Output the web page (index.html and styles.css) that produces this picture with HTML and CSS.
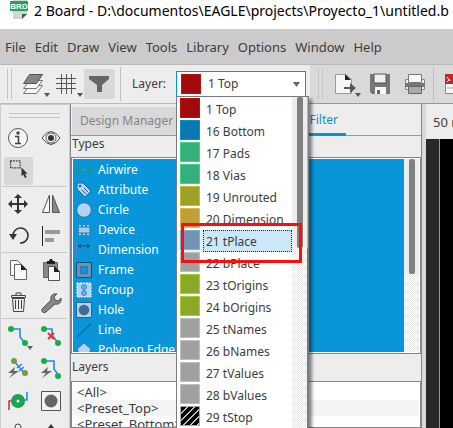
FILE: index.html
```html
<!DOCTYPE html>
<html lang="en">
<head>
<meta charset="utf-8">
<title>2 Board</title>
<link rel="stylesheet" href="styles.css">
</head>
<body>
<header class="titlebar">
  <svg class="app-icon" width="20" height="24" viewBox="0 0 20 24"><path d="M3 0h14v18l-5 5H3z" fill="#d4d6d6"/><path d="M12 23v-5h5z" fill="#555"/><rect x="0" y="5" width="18" height="10" rx="1" fill="#23a452"/><text x="9" y="13" class="app-icon-text">BRD</text></svg>
  <h1 class="title">2 Board - D:\documentos\EAGLE\projects\Proyecto_1\untitled.b</h1>
</header>
<nav class="menubar">
  <button>File</button><button>Edit</button><button>Draw</button><button>View</button><button>Tools</button><button>Library</button><button>Options</button><button>Window</button><button>Help</button>
</nav>
<div class="toolbar">
  <div class="tools-left">
    <span class="grip"></span>
    <button class="tool" aria-label="Layer settings"><svg width="32" height="30" viewBox="0 0 32 30"><g fill="#f7f7f7" stroke="#777"><path d="M3.500 24.500l6-8h13l-6 8z"/><path d="M3.500 19.500l6-8h13l-6 8z"/></g><path d="M3.500 14.500l6-9h13l-6 9z" fill="#858585" stroke="#555"/><path d="M24 24h6l-3 4z" fill="#555"/></svg></button>
    <button class="tool" aria-label="Grid"><svg width="32" height="30" viewBox="0 0 32 30"><path d="M9.500 5v20M14.500 5v20M19.500 5v20M4 9.500h20M4 14.500h20M4 19.500h20" fill="none" stroke="#555"/><path d="M25 24h6l-3 4z" fill="#555"/></svg></button>
    <button class="tool pressed" aria-label="Filter"><svg width="31" height="30" viewBox="0 0 31 30"><path d="M5 7h20v3l-7 6v7h-5v-7l-8-6z" fill="#666"/></svg></button>
    <span class="divider"></span>
    <label class="layer-label" for="layer">Layer:</label>
    <div class="combo">
      <select id="layer"><option>1 Top</option></select>
      <span class="swatch combo-swatch c-top"></span>
      <svg class="combo-arrow" width="7" height="6" viewBox="0 0 7 6"><path d="M0 0h7l-3.500 5z" fill="#666"/></svg>
      <div class="popup">
        <ul class="options" role="listbox" aria-label="Layer">
          <li role="option"><span class="swatch c-top"></span><span class="name">1 Top</span></li>
          <li role="option"><span class="swatch c-bottom"></span><span class="name">16 Bottom</span></li>
          <li role="option"><span class="swatch c-pads"></span><span class="name">17 Pads</span></li>
          <li role="option"><span class="swatch c-pads"></span><span class="name">18 Vias</span></li>
          <li role="option"><span class="swatch c-unrouted"></span><span class="name">19 Unrouted</span></li>
          <li role="option"><span class="swatch c-dimension"></span><span class="name">20 Dimension</span></li>
          <li role="option" aria-selected="true" class="selected"><span class="swatch c-place"></span><span class="name">21 tPlace</span></li>
          <li role="option"><span class="swatch c-gray"></span><span class="name">22 bPlace</span></li>
          <li role="option"><span class="swatch c-origins"></span><span class="name">23 tOrigins</span></li>
          <li role="option"><span class="swatch c-origins"></span><span class="name">24 bOrigins</span></li>
          <li role="option"><span class="swatch c-gray"></span><span class="name">25 tNames</span></li>
          <li role="option"><span class="swatch c-gray"></span><span class="name">26 bNames</span></li>
          <li role="option"><span class="swatch c-gray"></span><span class="name">27 tValues</span></li>
          <li role="option"><span class="swatch c-gray"></span><span class="name">28 bValues</span></li>
          <li role="option"><span class="swatch c-stop"></span><span class="name">29 tStop</span></li>
        </ul>
        <div class="scroll popup-scroll"><span class="thumb"></span></div>
        <span class="highlight"></span>
      </div>
    </div>
  </div>
  <div class="tools-right">
    <span class="grip"></span>
    <button class="tool" aria-label="Export"><svg width="32" height="30" viewBox="0 0 32 30"><path d="M4.500 5.500h10l6 5v14h-16z" fill="#f6f6f6" stroke="#999"/><path d="M14 5l6 6h-6z" fill="#222"/><path d="M13 18h6v-4l6 5-6 5v-4h-6z" fill="#555"/><path d="M24 24h6l-3 4z" fill="#555"/></svg></button>
    <button class="tool save" aria-label="Save"><svg width="32" height="30" viewBox="0 0 32 30"><path d="M5 5h20v20H7l-2-2z" fill="#777"/><path d="M9 5h12v9H9z" fill="#eee" stroke="#555"/><path d="M10 18h11v7H10z" fill="#f8f8f8"/><path d="M12 21h3v4h-3z" fill="#666"/></svg></button>
    <button class="tool print" aria-label="Print"><svg width="32" height="30" viewBox="0 0 32 30"><path d="M4.500 10.500h19v10h-19z" fill="#f0f0f0" stroke="#888"/><path d="M7.500 5.500h13v8h-13z" fill="#f8f8f8" stroke="#777"/><path d="M4 14h20v4H4z" fill="#777"/><path d="M7.500 17.500h13v7h-13z" fill="#aaa" stroke="#666"/></svg></button>
    <span class="divider"></span>
    <button class="tool cam" aria-label="CAM processor"><svg width="24" height="30" viewBox="0 0 24 30"><path d="M.5 5.500h18v19H.5z" fill="#f6f6f6" stroke="#888"/><path d="M0 5h19v10H0z" fill="#c8242c"/><path d="M2 8l3 4m-3 1 3-3" stroke="#fff" fill="none"/><path d="M2 19h8" stroke="#aaa"/></svg></button>
  </div>
</div>
<main class="workspace">
  <aside class="palette">
    <div class="hgrip"></div>
    <div class="group">
      <button aria-label="Info"><svg viewBox="0 0 32 32"><circle cx="16" cy="16" r="9.500" fill="#f5f5f5" stroke="#555"/><circle cx="16" cy="11" r="1.700" fill="#444"/><path d="M13 14.500h3.500v7M13 21.500h6" fill="none" stroke="#444" stroke-width="1.600"/></svg></button>
      <button aria-label="Show"><svg viewBox="0 0 32 32"><path d="M7 16Q16 3 25 16Q16 29 7 16z" fill="#f8f8f8" stroke="#444"/><circle cx="16" cy="16" r="5" fill="none" stroke="#555"/><circle cx="16" cy="16" r="3" fill="#333"/></svg></button>
      <button class="pressed" aria-label="Group select"><svg viewBox="0 0 32 32"><path d="M7.500 4.500h11v8h-11z" fill="none" stroke="#444" stroke-width="1.400" stroke-dasharray="2 1"/><path d="M20 12v10l2-2 2 4 2-1-2-4h3z" fill="#333"/></svg></button>
    </div>
    <div class="group">
      <button aria-label="Move"><svg viewBox="0 0 32 32"><path d="M16 7l4 4h-3v5h5v-3l4 4-4 4v-3h-5v5h3l-4 4-4-4h3v-5h-5v3l-4-4 4-4v3h5v-5h-3z" fill="#333"/></svg></button>
      <button aria-label="Mirror"><svg viewBox="0 0 32 32"><path d="M14.500 8v17.500h-7z" fill="#f8f8f8" stroke="#555"/><path d="M17.500 8v17.500h7z" fill="#888" stroke="#555"/></svg></button>
      <button aria-label="Rotate"><svg viewBox="0 0 32 32"><path d="M11 17a7.500 7.500 0 1 1 7 7" fill="none" stroke="#333" stroke-width="1.600"/><path d="M7 15h8l-4 6z" fill="#333"/></svg></button>
      <button aria-label="Align"><svg viewBox="0 0 32 32"><path d="M7.500 7v20" stroke="#222"/><path d="M10 11h15v4H10zM10 19h9v4h-9z" fill="#999"/></svg></button>
    </div>
    <div class="group">
      <button aria-label="Copy"><svg viewBox="0 0 32 32"><g fill="#f8f8f8" stroke="#666"><path d="M8.500 7.500h7l4 4v11h-11z"/><path d="M12.500 11.500h7l5 5v10h-12z"/></g><path d="M19 11l6 6h-6z" fill="#222"/></svg></button>
      <button aria-label="Paste"><svg viewBox="0 0 32 32"><path d="M8.500 9.500h14v15h-14z" fill="#888" stroke="#666"/><path d="M12 8h2l1-2h2l1 2h2v3h-8z" fill="#222"/><path d="M13.500 13.500h6l5 5v9h-11z" fill="#f8f8f8" stroke="#555"/><path d="M19 13l6 6h-6z" fill="#222"/></svg></button>
      <button aria-label="Delete"><svg viewBox="0 0 32 32"><path d="M10.500 13.500h12l-1 13h-10z" fill="#eee" stroke="#444"/><path d="M9.500 10.500h14v2h-14zM14 10V8h5v2" fill="#eee" stroke="#444"/><path d="M13.500 15v9M16.500 15v9M19.500 15v9" stroke="#444"/></svg></button>
      <button aria-label="Change"><svg viewBox="0 0 32 32"><path d="M7 24l9-9c-1-4 2-7 6-6l-3 3 1 3 3 1 3-3c1 4-2 7-6 6l-9 8c-3 2-5-1-4-3z" fill="#888" stroke="#555"/></svg></button>
    </div>
    <div class="group">
      <button aria-label="Route"><svg viewBox="0 0 32 32"><path d="M9 10h9v8l5 6" fill="none" stroke="#168eea" stroke-width="1.600"/><circle cx="9" cy="10" r="3" fill="#19ad49"/><circle cx="23" cy="24" r="3" fill="#19ad49"/><path d="M25 27h6l-3 4z" fill="#666"/></svg></button>
      <button aria-label="Ripup"><svg viewBox="0 0 32 32"><path d="M9 10h8v6l6 8" fill="none" stroke="#168eea" stroke-width="1.600"/><circle cx="9" cy="10" r="3" fill="#19ad49"/><circle cx="23" cy="24" r="3" fill="#19ad49"/><path d="M13 14l6 6m0-6-6 6" stroke="#f22c30" stroke-width="2"/></svg></button>
      <button aria-label="Fanout"><svg viewBox="0 0 32 32"><path d="M12 10l11 13M15 17l5-4M17 20l5-4" fill="none" stroke="#168eea" stroke-width="1.500"/><circle cx="12" cy="10" r="3" fill="#6ea044"/><circle cx="23" cy="22" r="3" fill="#6ea044"/><path d="M13 16l-7 6h5l-4 5 10-7h-5z" fill="#666"/></svg></button>
      <button aria-label="Autoroute"><svg viewBox="0 0 32 32"><path d="M9 10h10v8l5 7" fill="none" stroke="#168eea" stroke-width="1.600"/><circle cx="9" cy="10" r="3" fill="#19ad49"/><circle cx="23" cy="25" r="3" fill="#19ad49"/><path d="M13 16l-7 6h5l-4 5 10-7h-5z" fill="#666"/></svg></button>
      <button aria-label="Via"><svg viewBox="0 0 32 32"><path d="M7 27v-9h6" fill="none" stroke="#c53b43" stroke-width="1.600"/><path d="M20 17h5V9" fill="none" stroke="#168eea" stroke-width="1.600"/><circle cx="16" cy="18" r="7" fill="#19a552"/><circle cx="16" cy="18" r="1.500" fill="#fff"/></svg></button>
      <button aria-label="Hole"><svg viewBox="0 0 32 32"><path d="M6.500 8.500h19v19h-19z" fill="#f5f5f5" stroke="#555"/><circle cx="16" cy="18" r="6.500" fill="#666"/></svg></button>
      <button aria-label="Polygon"><svg viewBox="0 0 32 32"><circle cx="16" cy="12" r="3" fill="none" stroke="#444"/></svg></button>
      <button aria-label="Text"><svg viewBox="0 0 32 32"><path d="M16 9l6 8H10z" fill="#333"/></svg></button>
    </div>
  </aside>
  <section class="dock">
    <div class="tabs"><button class="tab">Design Manager</button><button class="tab active">Filter</button></div>
    <h2 class="head types-head">Types</h2>
    <div class="list types">
      <ul class="type-rows">
        <li><svg viewBox="0 0 16 16"><path d="M2 8h12" stroke="#789"/><circle cx="2.500" cy="8" r="2.500" fill="#169a78"/><circle cx="13.500" cy="8" r="2.500" fill="#169a78"/></svg>Airwire</li>
        <li><svg viewBox="0 0 16 16"><path d="M1 1h6l8 8-6 6-8-8z" fill="#b4d3ef" stroke="#28658f"/><circle cx="4" cy="4" r="1.300" fill="#28658f"/><path d="M6 8l4 4m-2-6 4 4" stroke="#28658f"/></svg>Attribute</li>
        <li><svg viewBox="0 0 16 16"><circle cx="8" cy="8" r="7.300" fill="#b4d3ef" stroke="#32709e"/></svg>Circle</li>
        <li><svg viewBox="0 0 16 16"><path d="M4 3v10M8 3v10M12 3v10" stroke="#b4d3ef" stroke-width="2"/><path d="M2 5h12v6H2V9l1-1-1-1z" fill="#a9cbe9" stroke="#39759e"/></svg>Device</li>
        <li><svg viewBox="0 0 16 16"><path d="M.5 0v16M15.500 0v16" stroke="#4b87b0"/><path d="M3 4h10M5 2L2 4l3 2m6-4 3 2-3 2" fill="none" stroke="#174d73"/></svg>Dimension</li>
        <li><svg viewBox="0 0 16 16"><path d="M2 2h12v12H2z" fill="none" stroke="#6893b8" stroke-width="4"/><path d="M.5.5h15v15H.5z" fill="none" stroke="#174d73"/><path d="M4.500 4.500h7v7h-7z" fill="none" stroke="#3975a0"/></svg>Frame</li>
        <li><svg viewBox="0 0 16 16"><path d="M1 1h14v14H1z" fill="#b4d3ef" stroke="#eaf6ff" stroke-dasharray="2 1"/><circle cx="8" cy="5" r="2.500" fill="#62afe2" stroke="#3b91cb"/><circle cx="8" cy="11" r="2.500" fill="#62afe2" stroke="#3b91cb"/></svg>Group</li>
        <li><svg viewBox="0 0 16 16"><path d="M.5.5h15v15H.5z" fill="#b4d3ef" stroke="#286793"/><circle cx="8" cy="8" r="5.300" fill="#426b91"/></svg>Hole</li>
        <li><svg viewBox="0 0 16 16"><path d="M1 15L15 2" stroke="#174d73"/></svg>Line</li>
        <li><svg viewBox="0 0 16 16"><path d="M8 1l7 6-3 8H4L1 7z" fill="#b4d3ef" stroke="#32709e"/></svg>Polygon Edge</li>
      </ul>
      <div class="scroll types-scroll"><span class="thumb"></span></div>
    </div>
    <h2 class="head layers-head">Layers</h2>
    <ul class="list presets"><li>&lt;All&gt;</li><li>&lt;Preset_Top&gt;</li><li>&lt;Preset_Bottom&gt;</li></ul>
  </section>
  <section class="board">
    <div class="coords">50 mil (0.0 1.9)</div>
    <div class="canvas"><span class="ruler"></span></div>
  </section>
</main>
</body>
</html>
```
FILE: styles.css
```css
* { box-sizing: border-box; }
body {
  margin: 0;
  height: 100vh;
  display: flex;
  flex-direction: column;
  overflow: hidden;
  background: #ededed;
  color: #3c3c3c;
  font: 12px/20px "Noto Sans", "Open Sans", sans-serif;
}
button { border: 0; padding: 0; background: none; color: inherit; font: inherit; }
ul { list-style: none; margin: 0; padding: 0; }
svg { display: block; flex: none; }

.titlebar {
  flex: none;
  height: 29px;
  display: flex;
  padding-left: 10px;
  gap: 4px;
  overflow: hidden;
  background: #fff;
}
.app-icon { margin-top: -4px; }
.app-icon-text { fill: #fff; font: bold 8px "Liberation Sans", sans-serif; text-anchor: middle; }
.title { margin: 0; color: #000; font-size: 14px; line-height: 22px; font-weight: 400; white-space: pre; }

.menubar {
  flex: none;
  height: 36px;
  display: flex;
  align-items: center;
  gap: 9px;
  padding-left: 5px;
  background: #cbcbcb;
  border-bottom: 1px solid #b9b9b9;
  font-size: 13px;
}

.toolbar { flex: none; height: 39px; display: flex; }
.tools-left { flex: none; width: 310px; display: flex; align-items: center; padding-left: 7px; border-bottom: 1px solid #bbb; }
.tools-right { flex: 1; min-width: 0; overflow: hidden; display: flex; align-items: center; padding-left: 8px; background: #d9d9d9; border-bottom: 1px solid #999; }
.grip { flex: none; width: 5px; height: 30px; border: solid #c4c4c4; border-width: 0 1px; margin-right: 8px; }
.tool { flex: none; height: 30px; }
.pressed { background: #d8d8d8; border-radius: 2px; }
.divider { flex: none; width: 1px; height: 34px; background: #c0c0c0; }
.save { margin-left: 2px; }
.print { margin-left: 4px; }
.cam { margin-left: 11px; }
.tools-left .divider { margin-left: 5px; }
.layer-label { width: 44px; margin-left: 11px; }

.combo { position: relative; width: 130px; height: 26px; }
.combo select {
  appearance: none;
  width: 100%;
  height: 100%;
  padding: 0 0 0 31px;
  border: 1px solid #0893d8;
  border-radius: 0;
  background: #fff;
  color: inherit;
  font: inherit;
}
.combo-swatch { position: absolute; left: 5px; top: 3px; }
.combo-arrow { position: absolute; right: 6px; top: 11px; }
.swatch { flex: none; width: 20px; height: 20px; border: 1px solid; }
.c-top { background: #a00b0b; border-color: #c20e0e; }
.c-bottom { background: #0878b0; border-color: #0b90d2; }
.c-pads { background: #35b07a; border-color: #35d68f; }
.c-unrouted { background: #a0a028; border-color: #c0bf28; }
.c-dimension { background: #c0a035; border-color: #e0be3c; }
.c-place { background: #7394b5; border-color: #86abd2; }
.c-gray { background: #a0a0a0; border-color: #bcc2bb; }
.c-origins { background: #8ca828; border-color: #a8d02c; }
.c-stop { background: repeating-linear-gradient(135deg, #000 0 4px, #bbb 4px 5px); border-color: #aaa; }

.popup {
  position: absolute;
  z-index: 2;
  top: 25px;
  left: 0;
  width: 133px;
  display: flex;
  background: #fff;
  border: 1px solid #777b84;
  border-right-width: 2px;
  box-shadow: 3px 3px 3px rgba(0, 0, 0, .45);
}
.options { flex: 1; padding-top: 1px; }
.options li { height: 22px; display: flex; padding-left: 3px; gap: 3px; white-space: nowrap; }
.name { flex: 1; height: 22px; padding-left: 3px; line-height: 24px; }
.selected { background: #e4f2fa; }
.selected .name { background: #cce8f6; border: 1px dotted #222; padding-left: 2px; line-height: 22px; }
.scroll { flex: none; background: repeating-conic-gradient(#e8e8e8 0 25%, #fff 0 50%) 0 0 / 2px 2px; }
.popup-scroll { width: 15px; }
.thumb { display: block; width: 6px; margin: 0 auto; background: #808080; border-radius: 2px; box-shadow: 0 0 0 5px #ededed; clip-path: inset(0 -5px); }
.popup-scroll .thumb { height: 151px; }
.highlight { position: absolute; left: 4px; top: 126px; width: 121px; height: 40px; border: 3px solid #ff0d0d; }

.workspace { flex: 1; min-height: 0; display: flex; }
.palette { flex: none; width: 70px; padding: 8px 2px 0 1px; border: solid #ccc; border-width: 1px 1px 0 1px; overflow: hidden; }
.hgrip { height: 5px; margin: 0 7px 4px 7px; border: solid #c4c4c4; border-width: 1px 0; }
.group { display: grid; grid-template-columns: 33px 33px; padding-bottom: 1px; border-bottom: 1px solid #c8c8c8; }
.group button { height: 32px; }
.group svg { width: 32px; height: 32px; }
.group .pressed { width: 29px; height: 28px; margin: 3px 0 0 2px; }
.group .pressed svg { margin-left: -2px; height: 28px; }

.dock { flex: none; width: 352px; display: flex; flex-direction: column; border: solid #83858f; border-width: 0 1px; }
.tabs { flex: none; height: 32px; display: flex; padding: 3px 75px 0 1px; border-bottom: 1px solid #999; }
.tab { padding: 0 8px; height: 28px; background: #d9d9d9; color: #858585; line-height: 24px; }
.active { height: 29px; margin-left: auto; background: none; color: #0893d8; border-bottom: 3px solid #0893d8; }
.head { flex: none; margin: 0; padding-left: 1px; font-size: 12px; font-weight: 400; }
.types-head { height: 21px; line-height: 16px; }
.list { border: 1px solid #83858f; background: #fff; }
.types { flex: none; height: 197px; display: flex; padding: 1px; overflow: hidden; }
.type-rows { flex: 1; height: 193px; padding-top: 1px; overflow: hidden; background: #0895d9; color: #fff; }
.type-rows li { height: 20px; display: flex; align-items: center; gap: 6px; padding-left: 3px; }
.type-rows svg { width: 16px; height: 16px; }
.types-scroll { width: 15px; }
.types-scroll .thumb { height: 115px; }
.layers-head { height: 27px; line-height: 26px; }
.presets { flex: 1; min-height: 0; padding: 2px 1px 0; overflow: hidden; font-size: 13px; }
.presets li { height: 16px; padding-left: 4px; line-height: 16px; }
.presets li:nth-child(2) { background: #f4f4f4; }

.board { flex: 1; min-width: 0; display: flex; flex-direction: column; border-left: 4px solid #d9d9d9; }
.coords { flex: none; height: 35px; padding-left: 7px; line-height: 36px; white-space: nowrap; overflow: hidden; font-size: 13px; }
.canvas { flex: 1; padding-left: 13px; background: linear-gradient(90deg, #282828 13px, #000 0); }
.ruler { display: block; width: 1px; height: 100%; background: #b59a45; }
```
